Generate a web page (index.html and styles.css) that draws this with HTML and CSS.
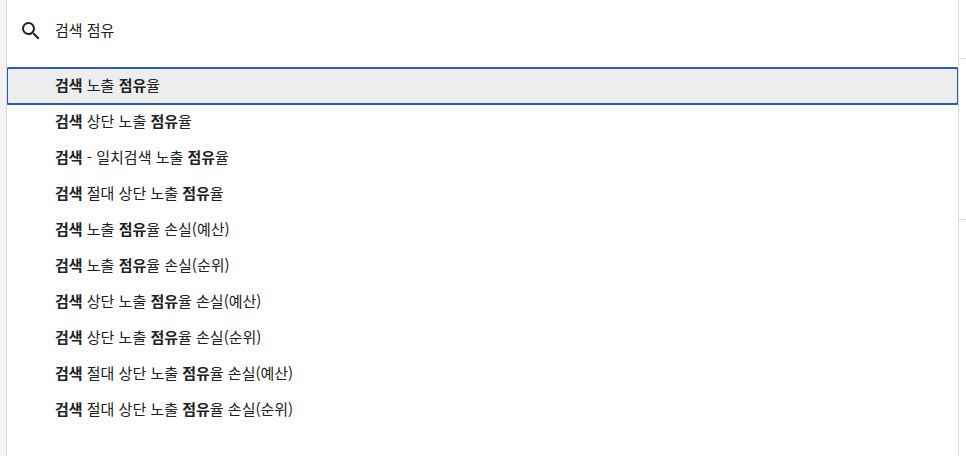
FILE: index.html
```html
<!DOCTYPE html>
<html lang="ko">
<head>
    <meta charset="UTF-8">
    <meta name="viewport" content="width=device-width, initial-scale=1.0">
    <title>검색 점유</title>
    <link rel="stylesheet" href="styles.css">
</head>
<body>

    <div class="page">
        <main class="panel">
            <div class="search-bar">
                <label for="search" aria-label="검색">
                    <svg class="search-icon" viewBox="0 0 24 24" aria-hidden="true">
                        <path d="M15.5 14h-.79l-.28-.27A6.471 6.471 0 0 0 16 9.5 6.5 6.5 0 1 0 9.5 16c1.61 0 3.09-.59 4.23-1.57l.27.28v.79l5 4.99L20.49 19l-4.99-5zm-6 0C7.01 14 5 11.99 5 9.5S7.01 5 9.5 5 14 7.01 14 9.5 11.99 14 9.5 14z"/>
                    </svg>
                </label>
                <input class="search-input" id="search" type="text" value="검색 점유" autocomplete="off">
            </div>
            <ul class="results" role="listbox" aria-label="검색 결과">
                <li class="result active" role="option" aria-selected="true"><b>검색</b> 노출 <b>점유</b>율</li>
                <li class="result" role="option"><b>검색</b> 상단 노출 <b>점유</b>율</li>
                <li class="result" role="option"><b>검색</b> - 일치검색 노출 <b>점유</b>율</li>
                <li class="result" role="option"><b>검색</b> 절대 상단 노출 <b>점유</b>율</li>
                <li class="result" role="option"><b>검색</b> 노출 <b>점유</b>율 손실(예산)</li>
                <li class="result" role="option"><b>검색</b> 노출 <b>점유</b>율 손실(순위)</li>
                <li class="result" role="option"><b>검색</b> 상단 노출 <b>점유</b>율 손실(예산)</li>
                <li class="result" role="option"><b>검색</b> 상단 노출 <b>점유</b>율 손실(순위)</li>
                <li class="result" role="option"><b>검색</b> 절대 상단 노출 <b>점유</b>율 손실(예산)</li>
                <li class="result" role="option"><b>검색</b> 절대 상단 노출 <b>점유</b>율 손실(순위)</li>
            </ul>
        </main>
        <!-- 옆 열의 가장자리 -->
        <div class="side">
            <div class="side-header"></div>
            <div class="side-block"></div>
        </div>
    </div>

</body>
</html>
```

FILE: styles.css
```css
* {
    box-sizing: border-box;
}

body {
    margin: 0;
    background-color: #f3f3f3;
    color: #202124;
    font-family: "Noto Sans CJK KR", sans-serif;
    font-size: 15px;
}

.page {
    display: grid;
    grid-template-columns: 1fr 7px;
    min-height: 100vh;
    padding-left: 6px;
}

.panel {
    background-color: #fff;
    border-left: 1px solid #dadce0;
    border-right: 1px solid #dadce0;
    overflow-x: clip;
}

.search-bar {
    display: flex;
    align-items: center;
    gap: 12px;
    height: 62px;
    padding-left: 12px;
}

.search-bar label {
    display: flex;
}

.search-icon {
    width: 24px;
    height: 24px;
    fill: #202124;
}

.search-input {
    flex: 1;
    height: 60px;
    padding: 0 0 4px;
    border: none;
    outline: none;
    background: none;
    color: #202124;
    font: inherit;
}

.results {
    margin: 0;
    padding: 6px 0;
    list-style: none;
}

.result {
    height: 36px;
    padding-left: 48px;
    line-height: 34px;
    white-space: nowrap;
    cursor: pointer;
}

.result:hover {
    background-color: #f5f5f5;
}

.result.active {
    background-color: #ededed;
    border-radius: 2px;
    outline: 2px solid #255dc1;
    outline-offset: -1px;
}

.side {
    background-color: #fff;
}

.side-header {
    height: 59px;
    border-bottom: 1px solid #dadce0;
}

.side-block {
    height: 161px;
    border-bottom: 1px solid #dadce0;
}
```
